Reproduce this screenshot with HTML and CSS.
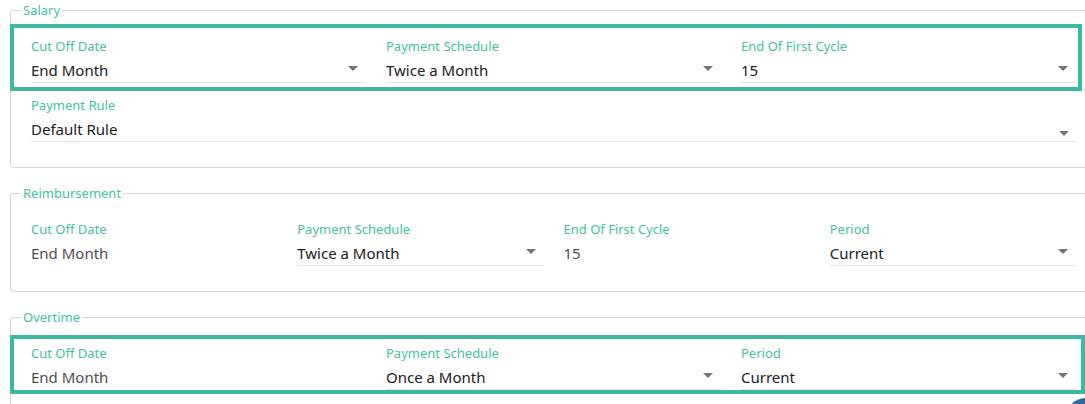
FILE: index.html
```html
<!DOCTYPE html>
<html lang="en">
<head>
<meta charset="utf-8">
<title>Payroll Settings</title>
<link rel="stylesheet" href="styles.css">
</head>
<body>
<div class="page">
  <fieldset class="section">
    <legend class="legend">Salary</legend>
    <div class="fields">
      <div class="row cols-3">
        <div class="field select">
          <div class="label">Cut Off Date</div>
          <div class="value">End Month<span class="caret"></span></div>
        </div>
        <div class="field select">
          <div class="label">Payment Schedule</div>
          <div class="value">Twice a Month<span class="caret"></span></div>
        </div>
        <div class="field select">
          <div class="label">End Of First Cycle</div>
          <div class="value">15<span class="caret"></span></div>
        </div>
      </div>
      <div class="row">
        <div class="field select">
          <div class="label">Payment Rule</div>
          <div class="value">Default Rule<span class="caret caret-low"></span></div>
        </div>
      </div>
    </div>
  </fieldset>

  <fieldset class="section">
    <legend class="legend">Reimbursement</legend>
    <div class="fields">
      <div class="row cols-4">
        <div class="field readonly">
          <div class="label">Cut Off Date</div>
          <div class="value">End Month</div>
        </div>
        <div class="field select">
          <div class="label">Payment Schedule</div>
          <div class="value">Twice a Month<span class="caret"></span></div>
        </div>
        <div class="field readonly">
          <div class="label">End Of First Cycle</div>
          <div class="value">15</div>
        </div>
        <div class="field select">
          <div class="label">Period</div>
          <div class="value">Current<span class="caret"></span></div>
        </div>
      </div>
    </div>
  </fieldset>

  <fieldset class="section">
    <legend class="legend">Overtime</legend>
    <div class="fields">
      <div class="row cols-3">
        <div class="field readonly">
          <div class="label">Cut Off Date</div>
          <div class="value">End Month</div>
        </div>
        <div class="field select">
          <div class="label">Payment Schedule</div>
          <div class="value">Once a Month<span class="caret"></span></div>
        </div>
        <div class="field select">
          <div class="label">Period</div>
          <div class="value">Current<span class="caret"></span></div>
        </div>
      </div>
    </div>
  </fieldset>

  <div class="highlight highlight-salary"></div>
  <div class="highlight highlight-overtime"></div>
  <div class="fab-peek"><div class="fab"></div></div>
</div>
</body>
</html>
```

FILE: styles.css
```css
html, body {
  margin: 0;
  padding: 0;
  background: #ffffff;
  overflow: hidden;
  width: 1085px;
  height: 404px;
}

body {
  font-family: "Noto Sans", "Open Sans", "Liberation Sans", sans-serif;
  color: #212121;
}

.page {
  position: relative;
  box-sizing: border-box;
  padding: 2px 0 0 10px;
  width: 1085px;
  height: 404px;
  overflow: hidden;
}

.section {
  box-sizing: border-box;
  margin: 0 0 17px 0;
  padding: 0 0 25px 0;
  width: 1075px;
  border: 1px solid #d6d6d6;
  border-right: 0;
  border-radius: 4px 0 0 4px;
  min-width: 0;
}

.legend {
  margin-left: 10px;
  padding: 0 2px;
  font-size: 13px;
  line-height: 16px;
  color: #45bfa6;
}

.fields {
  padding: 19px 0 0 20px;
  width: 1045px;
  display: flex;
  flex-direction: column;
  gap: 13px;
}

.row {
  display: grid;
  grid-template-columns: 1fr;
  column-gap: 20px;
}

.row.cols-3 {
  grid-template-columns: repeat(3, 1fr);
}

.row.cols-4 {
  grid-template-columns: repeat(4, 1fr);
}

.field {
  display: flex;
  flex-direction: column;
  gap: 4px;
  min-width: 0;
}

.label {
  font-size: 13px;
  line-height: 18px;
  color: #45bfa6;
  white-space: nowrap;
}

.value {
  position: relative;
  font-size: 15px;
  line-height: 22px;
  padding-bottom: 1px;
  border-bottom: 1px solid #e3e3e3;
  color: #212121;
  white-space: nowrap;
}

.readonly .value {
  border-bottom-color: transparent;
  color: #505050;
}

.caret {
  position: absolute;
  right: 8px;
  top: 7px;
  width: 0;
  height: 0;
  border-left: 5px solid transparent;
  border-right: 5px solid transparent;
  border-top: 5px solid #757575;
}

.caret-low {
  top: 13px;
  right: 7px;
}

.highlight {
  position: absolute;
  left: 10px;
  box-sizing: border-box;
  border: 4px solid #3cb9a0;
  pointer-events: none;
}

.highlight-salary {
  top: 24px;
  width: 1072px;
  height: 67px;
}

.highlight-overtime {
  top: 335px;
  width: 1075px;
  height: 59px;
}

.fab-peek {
  position: absolute;
  right: 0;
  bottom: 0;
  width: 19px;
  height: 6px;
  overflow: hidden;
}

.fab {
  width: 40px;
  height: 40px;
  border-radius: 50%;
  background: #2f69a1;
}
```
